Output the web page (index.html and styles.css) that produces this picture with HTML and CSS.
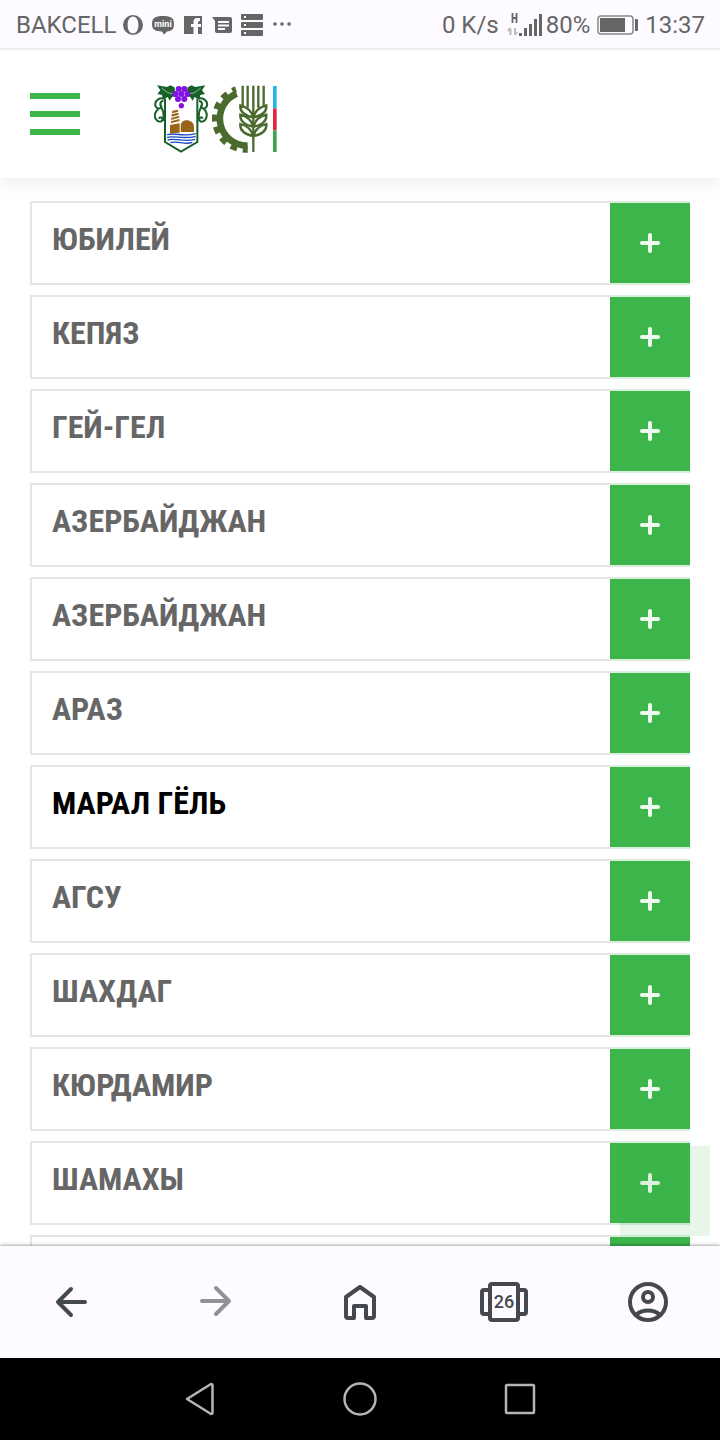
FILE: index.html
```html
<!DOCTYPE html>
<html lang="ru">
<head>
  <meta charset="UTF-8">
  <meta name="viewport" content="width=device-width, initial-scale=1">
  <title>Каталог</title>
  <link rel="stylesheet" href="styles.css">
</head>
<body>
  <div class="status-bar">
    <span>BAKCELL</span>
    <div class="status-icons">
      <svg width="20" height="20" viewBox="0 0 20 20"><path fill-rule="evenodd" d="M10 0a10 10 0 1 0 0 20a10 10 0 1 0 0-20zM10 1.500c3.500 0 5.400 4 5.400 8.500s-1.900 8.500-5.400 8.500s-5.400-4-5.400-8.500s1.900-8.500 5.400-8.500z"/></svg>
      <svg width="22" height="20" viewBox="0 0 22 20"><path d="M11 1c8 0 11 2 11 8s-3 7-7 7.500l-3 3-2-3C3 16 0 15 0 9s3-8 11-8z"/><text class="mini-text" x="11" y="12" text-anchor="middle">mini</text></svg>
      <svg width="20" height="20" viewBox="0 0 20 20"><path d="M1 1h18v18h-4v-7h3v-3h-3V7.500q0-1.500 1.500-1.500H17V3h-3q-3.500 0-3.500 4v2H8v3h2.500v7H1z"/></svg>
      <svg width="20" height="20" viewBox="0 0 20 20"><path fill-rule="evenodd" d="M0 2h18q2 0 2 2v12q0 2-2 2H5q-2 0-2-2V6zM6 6v2h11V6zM6 9.500v2h11v-2zM6 13v2h7v-2z"/></svg>
      <svg width="22" height="22" viewBox="0 0 22 22"><path fill-rule="evenodd" d="M1 0h20q1 0 1 1v4q0 1-1 1H1q-1 0-1-1V1q0-1 1-1zM3 2v2h2V2zM1 8h20q1 0 1 1v4q0 1-1 1H1q-1 0-1-1V9q0-1 1-1zM3 10v2h2v-2zM1 16h20q1 0 1 1v4q0 1-1 1H1q-1 0-1-1v-4q0-1 1-1zM3 18v2h2v-2z"/></svg>
      <svg width="20" height="20" viewBox="0 0 20 20"><circle cx="3" cy="9" r="1.800"/><circle cx="10" cy="9" r="1.800"/><circle cx="17" cy="9" r="1.800"/></svg>
    </div>
    <div class="status-right">
      <span>0 K/s</span>
      <svg class="signal" width="36" height="24" viewBox="0 0 36 24">
        <path d="M5.500 0v10M9.500 0v10M5.500 5h4" fill="none" stroke="#666" stroke-width="1.800"/>
        <path d="M3.500 22v-6M1 18l2.500-3M8 15v6M8 22l2-3" fill="none" stroke="#bbb" stroke-width="2"/>
        <path d="M12 20h3v3h-3zM17 15h3v8h-3zM22 11h3v12h-3zM27 6h3v17h-3zM32 1h3v22h-3z"/>
      </svg>
      <span>80%</span>
      <svg class="battery" width="42" height="20" viewBox="0 0 42 20"><rect x="1" y="1" width="35" height="18" rx="3" fill="none" stroke="#888" stroke-width="1.500"/><path d="M3 3h25v14H3zM38 4h2q1 0 1 1v10q0 1-1 1h-2z"/></svg>
      <span>13:37</span>
    </div>
  </div>

  <header class="header">
    <button class="menu-btn" aria-label="Меню"><span></span><span></span><span></span></button>
    <a class="logo" href="#" aria-label="Главная">
      <svg width="124" height="68" viewBox="27 27 372 204">
        <!-- crest -->
        <path d="M60 68v130l48 29 49-29V68" fill="#fff" stroke="#17602a" stroke-width="6"/>
        <path d="M88 34L76 28 66 33 36 28 46 43 37 54 51 57 54 72 68 63 74 74 82 62 94 62zM128 34L140 28 150 33 181 28 171 43 180 54 166 57 163 72 149 63 143 74 135 62 123 62z" fill="#17602a"/>
        <path d="M50 36l18 14 14 3M167 36l-18 14-14 3" fill="none" stroke="#cfe6cf" stroke-width="2"/>
        <path d="M55 67C43 65 33 72 31 82c-2 9 4 17 13 15 7-2 6-11 0-10M42 97c-11 10-16 23-9 33 5 9 17 9 19 1 1-7-8-10-10-3M55 74c-11 2-11 14-5 22 7 12 7 24 4 39M162 67c12-2 22 5 24 15 2 9-4 17-13 15-7-2-6-11 0-10M175 97c11 10 12 23 7 33-5 9-17 9-19 1-1-7 8-10 10-3M162 74c11 2 11 14 5 22-7 12-7 24-4 39" fill="none" stroke="#17602a" stroke-width="6"/>
        <g fill="#8410e8">
          <circle cx="101" cy="39" r="9"/><circle cx="118" cy="39" r="9"/><circle cx="92" cy="54" r="9"/><circle cx="109" cy="54" r="9"/><circle cx="127" cy="54" r="9"/><circle cx="99" cy="69" r="9"/><circle cx="118" cy="69" r="9"/><circle cx="109" cy="89" r="8"/>
        </g>
        <path d="M82 104l16-3 2 6-19 5zM80 115l20-5 1 6-21 6zM79 126l23-7 1 6-25 7zM78 136l25-7 1 6-26 7zM75 147l29-5v28l-29 3zM107 168v-19c0-24 40-21 40 3v16z" fill="#9a6518"/>
        <path d="M66 176c26-6 50 7 86-3M66 184c26-6 50 7 86-3M68 192c26-7 50 8 82-2M76 200c22-7 44 8 66-1" fill="none" stroke="#184bc0" stroke-width="4"/>
        <!-- gear -->
        <g fill="none" stroke="#4b6b2e">
          <path d="M308 209A81 81 0 0 1 275 53" stroke-width="20"/>
          <path d="M308 221A93 93 0 0 1 273 40" stroke-width="18" stroke-dasharray="20 17" stroke-dashoffset="5"/>
        </g>
        <!-- wheat -->
        <g fill="#fff" stroke="#4b6b2e" stroke-width="7">
          <path d="M293 29v60M308 29v66M340 29v66M356 29v60"/>
          <path d="M324 180c-24-5-40-15-38-36 21 6 35 17 38 36zM326 180c24-5 40-15 38-36-21 6-35 17-38 36z"/>
          <path d="M324 152c-24-5-40-15-38-36 21 6 35 17 38 36zM326 152c24-5 40-15 38-36-21 6-35 17-38 36z"/>
          <path d="M324 124c-24-5-40-15-38-36 21 6 35 17 38 36zM326 124c24-5 40-15 38-36-21 6-35 17-38 36z"/>
          <path d="M325 29v199"/>
        </g>
        <path d="M384 30h11v67h-11z" fill="#23b5e6"/><path d="M384 97h11v66h-11z" fill="#df273f"/><path d="M384 163h11v65h-11z" fill="#3ba552"/>
      </svg>
    </a>
  </header>

  <main class="content">
    <ul class="list">
      <li class="item"><h2>ЮБИЛЕЙ</h2><button aria-label="Открыть"></button></li>
      <li class="item"><h2>КЕПЯЗ</h2><button aria-label="Открыть"></button></li>
      <li class="item"><h2>ГЕЙ-ГЕЛ</h2><button aria-label="Открыть"></button></li>
      <li class="item"><h2>АЗЕРБАЙДЖАН</h2><button aria-label="Открыть"></button></li>
      <li class="item"><h2>АЗЕРБАЙДЖАН</h2><button aria-label="Открыть"></button></li>
      <li class="item"><h2>АРАЗ</h2><button aria-label="Открыть"></button></li>
      <li class="item active"><h2>МАРАЛ ГЁЛЬ</h2><button aria-label="Открыть"></button></li>
      <li class="item"><h2>АГСУ</h2><button aria-label="Открыть"></button></li>
      <li class="item"><h2>ШАХДАГ</h2><button aria-label="Открыть"></button></li>
      <li class="item"><h2>КЮРДАМИР</h2><button aria-label="Открыть"></button></li>
      <li class="item"><h2>ШАМАХЫ</h2><button aria-label="Открыть"></button></li>
      <li class="item"><h2></h2><button aria-label="Открыть"></button></li>
    </ul>
    <a class="to-top" href="#" aria-label="Наверх"></a>
  </main>

  <nav class="toolbar">
    <button aria-label="Назад"><svg viewBox="0 0 48 48"><path d="M37 24H10M23 11L10 24l13 13"/></svg></button>
    <button class="disabled" aria-label="Вперёд"><svg viewBox="0 0 48 48"><path d="M10 23h27M24 10l13 13-13 13"/></svg></button>
    <button aria-label="Домой"><svg viewBox="0 0 48 48"><path d="M10 19L24 9l14 10v19q0 2-2 2h-6V28H18v12h-6q-2 0-2-2z"/></svg></button>
    <button aria-label="Вкладки"><svg viewBox="0 0 48 48"><rect x="10" y="6" width="28" height="36" rx="2"/><path d="M10 12H4q-2 0-2 2v20q0 2 2 2h6M38 12h6q2 0 2 2v20q0 2-2 2h-6"/><text class="tab-count" x="24" y="30" text-anchor="middle">26</text></svg></button>
    <button aria-label="Профиль"><svg viewBox="0 0 48 48"><circle cx="24" cy="24" r="18"/><circle cx="24" cy="19" r="5"/><path d="M12 37c6-6 18-6 24 0"/></svg></button>
  </nav>

  <nav class="system-nav">
    <button aria-label="Назад"><svg viewBox="0 0 36 36"><path d="M5 18L29 3q1.500 0 1.500 1.500v27q0 1.500-1.500 1.500z"/></svg></button>
    <button aria-label="Главный экран"><svg viewBox="0 0 36 36"><circle cx="18" cy="18" r="15.500"/></svg></button>
    <button aria-label="Недавние"><svg viewBox="0 0 36 36"><rect x="4" y="4" width="28" height="28" rx="1"/></svg></button>
  </nav>
</body>
</html>
```

FILE: styles.css
```css
* { box-sizing: border-box; }
body { margin: 0; height: 100vh; display: flex; flex-direction: column; background: #fff; font-family: Roboto, sans-serif; overflow: hidden; }
button { padding: 0; border: 0; background: none; cursor: pointer; }
svg { display: block; }

/* status bar */
.status-bar { position: relative; z-index: 3; display: flex; align-items: center; height: 48px; padding: 2px 15px 0 16px; background: #fdfbff; color: #666; font-size: 24px; line-height: 46px; box-shadow: 0 1px 3px rgba(0, 0, 0, 0.15); }
.status-icons { display: flex; align-items: center; gap: 9px; margin-left: 7px; }
.status-icons svg, .signal, .battery { fill: #666; }
.status-icons .mini-text { fill: #fff; font-size: 9px; font-weight: bold; }
.status-right { display: flex; align-items: center; margin-left: auto; }
.signal { margin-left: 8px; margin-right: 3px; }
.battery { margin: 0 6px 0 7px; }

/* header */
.header { position: relative; z-index: 2; display: flex; align-items: center; gap: 74px; height: 130px; padding: 0 30px; background: #fff; box-shadow: 0 5px 15px rgba(0, 0, 0, 0.07); }
.menu-btn { display: flex; flex-direction: column; gap: 12px; width: 50px; padding-top: 2px; }
.menu-btn span { width: 100%; height: 6px; background: #3cb54a; }
.logo { padding-top: 12px; }

/* list */
.content { position: relative; flex: 1; min-height: 0; overflow: hidden; padding: 23px 30px 0; }
.list { margin: 0; padding: 0; list-style: none; }
.item { display: flex; height: 84px; margin-bottom: 10px; }
.item h2 { flex: 1; margin: 0; padding-left: 20px; border: 2px solid #e5e5e5; border-right: 0; color: #666; font-family: "Roboto Condensed", "Liberation Sans Narrow", Roboto, sans-serif; font-size: 32px; font-weight: bold; line-height: 72px; }
.item.active h2 { color: #000; }
.item button { position: relative; width: 80px; background: #3cb54a; border: solid #d8eedb; border-width: 2px 0; }
.item button::before, .item button::after { content: ""; position: absolute; top: 50%; left: 50%; width: 20px; height: 4px; border-radius: 2px; background: #eefbef; transform: translate(-50%, -50%); }
.item button::after { width: 4px; height: 20px; }
.to-top { position: absolute; right: 10px; bottom: 10px; width: 90px; height: 90px; background: rgba(60, 181, 74, 0.12); }

/* browser toolbar */
.toolbar { position: relative; z-index: 2; display: flex; height: 112px; background: #fdfbff; box-shadow: 0 -1px 3px rgba(0, 0, 0, 0.35); }
.toolbar button { flex: 1; display: flex; align-items: center; justify-content: center; }
.toolbar svg { width: 48px; height: 48px; fill: none; stroke: #45484f; stroke-width: 4; stroke-linecap: round; stroke-linejoin: round; }
.toolbar .disabled svg { stroke: #929294; }
.toolbar .tab-count { fill: #45484f; stroke: none; font-family: Roboto, sans-serif; font-size: 18px; font-weight: 500; }

/* system buttons */
.system-nav { display: flex; justify-content: center; height: 82px; background: #000; }
.system-nav button { width: 160px; display: flex; align-items: center; justify-content: center; }
.system-nav svg { width: 36px; height: 36px; fill: none; stroke: #b5b5b5; stroke-width: 2.5; stroke-linejoin: round; }
```
